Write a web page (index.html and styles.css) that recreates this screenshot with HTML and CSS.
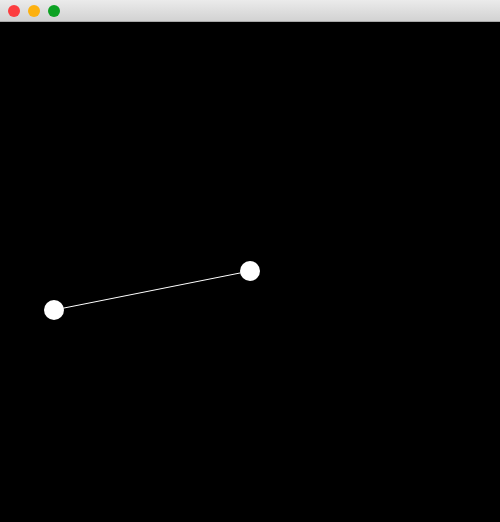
FILE: index.html
```html
<!DOCTYPE html>
<html>
<head>
<meta charset="utf-8">
<link rel="stylesheet" href="styles.css">
</head>
<body>
<div class="window">
  <div class="titlebar">
    <span class="light red"></span>
    <span class="light yellow"></span>
    <span class="light green"></span>
  </div>
  <svg class="canvas" width="500" height="500" viewBox="0 22 500 500">
    <line x1="54" y1="310" x2="250" y2="271" stroke="#ffffff" stroke-width="1"/>
    <circle cx="54" cy="310" r="10" fill="#ffffff"/>
    <circle cx="250" cy="271" r="10" fill="#ffffff"/>
  </svg>
</div>
</body>
</html>
```
FILE: styles.css
```css
html, body {
  margin: 0;
  padding: 0;
  background: #000;
}
.window {
  width: 500px;
  height: 522px;
  display: flex;
  flex-direction: column;
  background: #000;
}
.titlebar {
  height: 21px;
  border-bottom: 1px solid #a9a9a9;
  background: linear-gradient(#ebebeb, #d2d2d2);
  display: flex;
  align-items: center;
  gap: 8px;
  padding-left: 8px;
  box-sizing: content-box;
}
.light {
  width: 12px;
  height: 12px;
  border-radius: 50%;
  display: block;
}
.red { background: #fc3d3f; }
.yellow { background: #fdb10f; }
.green { background: #0da223; }
.canvas {
  display: block;
  background: #000;
}
```
